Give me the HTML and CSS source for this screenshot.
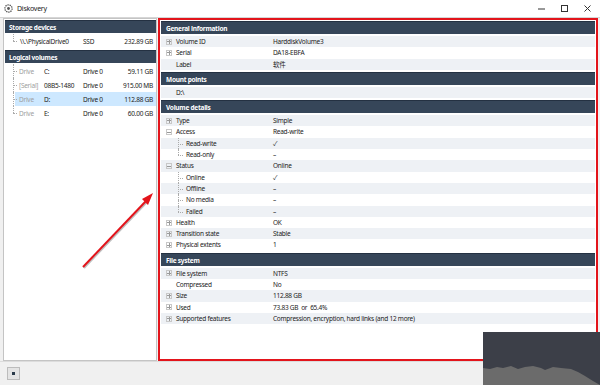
FILE: index.html
```html
<!DOCTYPE html>
<html lang="en">
<head>
    <meta charset="UTF-8">
    <title>Diskovery</title>
    <link rel="stylesheet" href="styles.css">
</head>
<body>
    <div class="window">
        <div class="titlebar">
            <svg class="app-icon" width="9" height="9" viewBox="0 0 9 9">
                <circle cx="4.5" cy="4.5" r="3.6" fill="none" stroke="#555" stroke-width="1.3" stroke-dasharray="1.4 0.8"/>
                <circle cx="4.5" cy="4.5" r="1.4" fill="#555"/>
            </svg>
            <span class="title">Diskovery</span>
            <div class="controls">
                <svg width="9" height="9" viewBox="0 0 9 9"><path d="M1 5h7" stroke="#333" stroke-width="1"/></svg>
                <svg width="9" height="9" viewBox="0 0 9 9"><rect x="1.5" y="1.5" width="6" height="6" fill="none" stroke="#333" stroke-width="1"/></svg>
                <svg width="9" height="9" viewBox="0 0 9 9"><path d="M1.5 1.5l6 6M7.5 1.5l-6 6" stroke="#333" stroke-width="1"/></svg>
            </div>
        </div>

        <div class="main">
            <div class="sidebar">
                <div class="group-header">Storage devices</div>
                <div class="tree">
                    <div class="srow last">
                        <span class="c-name wide">\\.\PhysicalDrive0</span>
                        <span class="c-dev">SSD</span>
                        <span class="c-size">232.89 GB</span>
                    </div>
                </div>
                <div class="group-header">Logical volumes</div>
                <div class="tree">
                    <div class="srow">
                        <span class="c-kind">Drive</span><span class="c-name">C:</span>
                        <span class="c-dev">Drive 0</span><span class="c-size">59.11 GB</span>
                    </div>
                    <div class="srow">
                        <span class="c-kind">[Serial]</span><span class="c-name">08B5-1480</span>
                        <span class="c-dev">Drive 0</span><span class="c-size">915.00 MB</span>
                    </div>
                    <div class="srow selected">
                        <span class="c-kind">Drive</span><span class="c-name">D:</span>
                        <span class="c-dev">Drive 0</span><span class="c-size">112.88 GB</span>
                    </div>
                    <div class="srow last">
                        <span class="c-kind">Drive</span><span class="c-name">E:</span>
                        <span class="c-dev">Drive 0</span><span class="c-size">60.00 GB</span>
                    </div>
                </div>
            </div>

            <div class="details">
                <div class="section">
                    <div class="sec-header">General information</div>
                    <div class="prop"><span class="key"><i class="exp plus"></i>Volume ID</span><span>HarddiskVolume3</span></div>
                    <div class="prop"><span class="key"><i class="exp plus"></i>Serial</span><span>DA18-EBFA</span></div>
                    <div class="prop"><span class="key">Label</span><span>软件</span></div>
                </div>
                <div class="section">
                    <div class="sec-header">Mount points</div>
                    <div class="prop"><span class="key">D:\</span><span></span></div>
                </div>
                <div class="section">
                    <div class="sec-header">Volume details</div>
                    <div class="prop"><span class="key"><i class="exp plus"></i>Type</span><span>Simple</span></div>
                    <div class="prop"><span class="key"><i class="exp minus"></i>Access</span><span>Read-write</span></div>
                    <div class="prop child"><span class="key">Read-write</span><span>✓</span></div>
                    <div class="prop child last"><span class="key">Read-only</span><span>–</span></div>
                    <div class="prop"><span class="key"><i class="exp minus"></i>Status</span><span>Online</span></div>
                    <div class="prop child"><span class="key">Online</span><span>✓</span></div>
                    <div class="prop child"><span class="key">Offline</span><span>–</span></div>
                    <div class="prop child"><span class="key">No media</span><span>–</span></div>
                    <div class="prop child last"><span class="key">Failed</span><span>–</span></div>
                    <div class="prop"><span class="key"><i class="exp plus"></i>Health</span><span>OK</span></div>
                    <div class="prop"><span class="key"><i class="exp plus"></i>Transition state</span><span>Stable</span></div>
                    <div class="prop"><span class="key"><i class="exp plus"></i>Physical extents</span><span>1</span></div>
                </div>
                <div class="section">
                    <div class="sec-header">File system</div>
                    <div class="prop"><span class="key"><i class="exp plus"></i>File system</span><span>NTFS</span></div>
                    <div class="prop"><span class="key">Compressed</span><span>No</span></div>
                    <div class="prop"><span class="key"><i class="exp plus"></i>Size</span><span>112.88 GB</span></div>
                    <div class="prop"><span class="key"><i class="exp plus"></i>Used</span><span>73.83 GB&nbsp; or&nbsp; 65.4%</span></div>
                    <div class="prop"><span class="key"><i class="exp plus"></i>Supported features</span><span>Compression, encryption, hard links (and 12 more)</span></div>
                </div>
            </div>
        </div>

        <div class="statusbar">
            <button class="sb-button"><span></span></button>
        </div>

        <!-- annotation arrow -->
        <svg class="arrow" width="90" height="90" viewBox="0 0 90 90">
            <path d="M3 86 L66 20" stroke="rgba(0,0,0,0.25)" stroke-width="2" transform="translate(1 1)"/>
            <path d="M3 86 L66 20" stroke="#e3141b" stroke-width="2"/>
            <polygon points="73,12 62,18 68,24" fill="#e3141b"/>
        </svg>

        <!-- watermark -->
        <svg class="watermark" width="117" height="53" viewBox="0 0 117 53">
            <rect width="117" height="53" fill="#3c3f48"/>
            <polygon points="0,36 7,37 14,35 20,36 28,34 35,37 42,35 50,34 58,36 62,38 70,35 78,36 88,37 95,40 102,44 110,49 117,53 0,53" fill="#6b6b6b"/>
        </svg>
    </div>
</body>
</html>
```

FILE: styles.css
```css
body {
    margin: 0;
    padding: 0;
    font-family: 'Noto Sans', 'Noto Sans CJK SC', sans-serif;
    font-size: 6.5px;
    letter-spacing: -0.25px;
    color: #222;
    background-color: #f0f0f0;
}
.window {
    position: relative;
    width: 600px;
    height: 385px;
    overflow: hidden;
    display: flex;
    flex-direction: column;
}
.titlebar {
    height: 17px;
    background-color: #fff;
    border-bottom: 1px solid #d6d6d6;
    display: flex;
    align-items: center;
    padding-left: 4px;
}
.app-icon {
    margin-right: 4px;
}
.title {
    font-size: 7px;
    color: #222;
}
.controls {
    margin-left: auto;
    display: flex;
    gap: 14px;
    padding-right: 8px;
}
.main {
    height: 343px;
    display: flex;
    padding: 0 2px 0 3px;
    gap: 1px;
}
.sidebar {
    width: 151px;
    height: 340px;
    background-color: #fff;
    border: 1px solid #c4c4c4;
    padding: 1px 0 0 1px;
}
.group-header {
    height: 13px;
    line-height: 13px;
    background-color: #364659;
    color: #fff;
    font-weight: bold;
    padding-left: 4px;
    border-top: 1px solid #243142;
    box-sizing: border-box;
}
.tree {
    padding: 1px 0 2px 10px;
}
.srow {
    position: relative;
    height: 14px;
    display: flex;
    align-items: center;
    padding-left: 4px;
    white-space: nowrap;
}
.srow::before {
    content: '';
    position: absolute;
    left: -2px;
    top: 0;
    bottom: 0;
    border-left: 1px dotted #aaa;
}
.srow.last::before {
    bottom: 7px;
}
.srow::after {
    content: '';
    position: absolute;
    left: -2px;
    top: 7px;
    width: 4px;
    border-top: 1px dotted #aaa;
}
.srow.selected {
    background-color: #cde8ff;
}
.c-kind {
    width: 25px;
    color: #a0a0a0;
}
.c-name {
    width: 39px;
}
.c-name.wide {
    width: 63px;
    padding-left: 1px;
}
.c-dev {
    width: 40px;
}
.c-size {
    flex: 1;
    text-align: right;
    padding-right: 3px;
}
.details {
    flex: 1;
    height: 338px;
    border: 2px solid #e3141b;
    background-color: #fff;
    padding: 1px 1px 0 1px;
}
.section {
    margin-bottom: 2px;
}
.sec-header {
    height: 13px;
    line-height: 13px;
    background-color: #364659;
    border-top: 1px solid #243142;
    box-sizing: border-box;
    color: #fff;
    font-weight: bold;
    padding-left: 5px;
    margin-bottom: 2px;
}
.prop {
    position: relative;
    height: 11.3px;
    line-height: 11.3px;
    display: grid;
    grid-template-columns: 112px 1fr;
    white-space: nowrap;
}
.prop:nth-of-type(even) {
    background-color: #eef1f5;
}
.key {
    display: flex;
    align-items: center;
    padding-left: 15px;
}
.exp {
    position: relative;
    width: 6px;
    height: 6px;
    border: 1px solid #c8c8c8;
    box-sizing: border-box;
    margin-left: -10px;
    margin-right: 4px;
}
.exp::before {
    content: '';
    position: absolute;
    left: 0;
    top: 1.5px;
    width: 4px;
    border-top: 1px solid #999;
}
.exp.plus::after {
    content: '';
    position: absolute;
    left: 1.5px;
    top: 0;
    height: 4px;
    border-left: 1px solid #999;
}
.child .key {
    padding-left: 25px;
}
.child::before {
    content: '';
    position: absolute;
    left: 17px;
    top: 0;
    bottom: 0;
    border-left: 1px dotted #aaa;
}
.child.last::before {
    bottom: 5px;
}
.child::after {
    content: '';
    position: absolute;
    left: 17px;
    top: 6px;
    width: 5px;
    border-top: 1px dotted #aaa;
}
.statusbar {
    flex: 1;
    border-top: 1px solid #dcdcdc;
    display: flex;
    align-items: center;
    padding-left: 7px;
}
.sb-button {
    width: 13px;
    height: 13px;
    padding: 0;
    border: 1px solid #bcbcbc;
    background-color: #e4e4e4;
    display: flex;
    align-items: center;
    justify-content: center;
}
.sb-button span {
    width: 3px;
    height: 3px;
    background-color: #2a3a4a;
}
.arrow {
    position: absolute;
    left: 80px;
    top: 181px;
}
.watermark {
    position: absolute;
    left: 483px;
    top: 332px;
}
```
